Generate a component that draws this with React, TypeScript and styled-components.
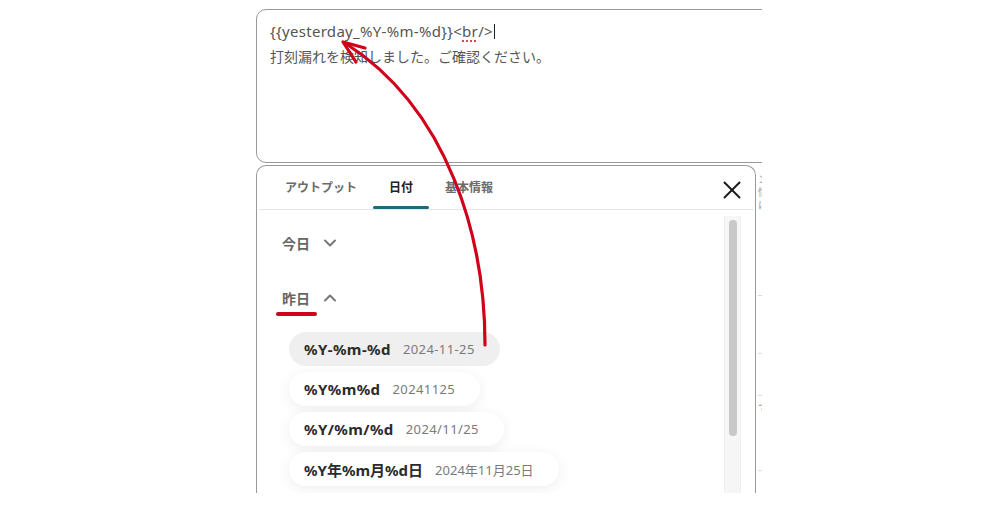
import React from 'react';
import styled, { createGlobalStyle } from 'styled-components';
import { ChevronDown, ChevronUp, X } from 'lucide-react';

const GlobalStyle = createGlobalStyle`
  html, body {
    margin: 0;
    padding: 0;
    background: #fff;
  }
  body {
    font-family: "Noto Sans", "Noto Sans CJK JP", sans-serif;
  }
`;

const Page = styled.div`
  position: relative;
  width: 1000px;
  height: 506px;
  overflow: hidden;
  background: #fff;
`;

const Frame = styled.div`
  margin-left: 256px;
  width: 506px;
  height: 493px;
  padding-top: 9px;
  box-sizing: border-box;
  overflow: hidden;
  display: flex;
  flex-direction: column;
  gap: 2px;
`;

const Editor = styled.div`
  flex: none;
  width: 560px;
  height: 154px;
  box-sizing: border-box;
  border: 1.5px solid #999;
  border-radius: 10px;
  padding: 8px 13px;
  font-size: 14px;
  line-height: 26px;
  color: #555;
`;

const CodeLine = styled.div`
  font-size: 15px;
  letter-spacing: 0.3px;
`;

const Spell = styled.span`
  text-decoration: underline dotted #e0434b;
  text-decoration-thickness: 2px;
  text-underline-offset: 3px;
`;

const Caret = styled.span`
  display: inline-block;
  width: 1px;
  height: 15px;
  margin-left: 1px;
  vertical-align: -2px;
  background: #222;
`;

const Lower = styled.div`
  display: flex;
  flex: 1;
  min-height: 0;
`;

const Popup = styled.div`
  flex: none;
  width: 500px;
  box-sizing: border-box;
  border: 1.5px solid #999;
  border-bottom: none;
  border-radius: 10px 10px 0 0;
  display: flex;
  flex-direction: column;
`;

const TabBar = styled.div`
  display: flex;
  align-items: stretch;
  height: 43px;
  margin: 0 2px;
  padding-left: 10px;
  border-bottom: 1px solid #e6e6e6;
`;

const Tab = styled.div<{ $active?: boolean }>`
  display: flex;
  flex-direction: column;
  padding: 0 16px;
  font-size: 12px;
  font-weight: 700;
  color: ${(p) => (p.$active ? '#222' : '#6b6b6b')};
`;

const TabLabel = styled.span`
  flex: 1;
  display: flex;
  align-items: center;
  padding-top: 1px;
`;

const TabIndicator = styled.span<{ $active?: boolean }>`
  height: 3px;
  margin: 0 -16px;
  border-radius: 2px;
  background: ${(p) => (p.$active ? '#1d6a80' : 'transparent')};
`;

const CloseButton = styled.button`
  margin: 4px 6px 0 auto;
  align-self: center;
  width: 30px;
  height: 30px;
  padding: 0;
  border: none;
  background: none;
  display: flex;
  align-items: center;
  justify-content: center;
  color: #1c1c1c;
`;

const Body = styled.div`
  display: flex;
  flex: 1;
  min-height: 0;
`;

const Content = styled.div`
  flex: 1;
  padding: 21px 0 0 25px;
  display: flex;
  flex-direction: column;
`;

const SectionHeader = styled.div<{ $gap?: number }>`
  display: flex;
  align-items: center;
  gap: 10px;
  height: 24px;
  margin-top: ${(p) => p.$gap ?? 0}px;
  font-size: 14px;
  font-weight: 700;
  color: #666;
`;

const ChipList = styled.div`
  display: flex;
  flex-direction: column;
  align-items: flex-start;
  gap: 6px;
  margin: 22px 0 0 7px;
`;

const Chip = styled.div<{ $selected?: boolean; $tight?: boolean }>`
  display: inline-flex;
  align-items: center;
  gap: 12px;
  height: 34px;
  padding: 0 25px 0 15px;
  border-radius: 17px;
  background: ${(p) => (p.$selected ? '#efefef' : '#fff')};
  box-shadow: ${(p) => (p.$selected ? 'none' : '0 3px 14px rgba(0, 0, 0, 0.07)')};
  letter-spacing: ${(p) => (p.$tight ? '0' : '0.4px')};
`;

const ChipLabel = styled.span`
  font-size: 15px;
  font-weight: 700;
  color: #2b2b2b;
`;

const ChipValue = styled.span`
  font-size: 13px;
  color: #7a7a7a;
`;

const Track = styled.div`
  flex: none;
  width: 17px;
  margin: 6px 14px 0 0;
  box-sizing: border-box;
  background: #f6f6f6;
  border-left: 1px solid #eeeeee;
  border-right: 1px solid #eeeeee;
`;

const Thumb = styled.div`
  width: 8px;
  height: 216px;
  margin: 4px auto 0;
  border-radius: 4px;
  background: #c8c8c8;
`;

const SidePanel = styled.div`
  flex: 1;
  padding: 8px 0 0 2px;
  display: flex;
  flex-direction: column;
  font-size: 10px;
  line-height: 13px;
  color: #9a9a9a;
  white-space: nowrap;
`;

const SideRow = styled.div<{ $top: number; $h: number }>`
  margin-top: ${(p) => p.$top}px;
  height: ${(p) => p.$h}px;
  border-top: 1px solid #dddddd;
  padding-top: 6px;
`;

const Annotation = styled.svg`
  position: absolute;
  top: 0;
  left: 0;
  pointer-events: none;
`;

const formats = [
  { label: '%Y-%m-%d', value: '2024-11-25', selected: true },
  { label: '%Y%m%d', value: '20241125' },
  { label: '%Y/%m/%d', value: '2024/11/25' },
  { label: '%Y年%m月%d日', value: '2024年11月25日', tight: true },
];

export default function App() {
  return (
    <Page>
      <GlobalStyle />
      <Frame>
        <Editor>
          <CodeLine>
            {'{{yesterday_%Y-%m-%d}}<'}
            <Spell>br</Spell>
            {'/>'}
            <Caret />
          </CodeLine>
          <div>打刻漏れを検知しました。ご確認ください。</div>
        </Editor>
        <Lower>
          <Popup>
            <TabBar>
              <Tab>
                <TabLabel>アウトプット</TabLabel>
                <TabIndicator />
              </Tab>
              <Tab $active>
                <TabLabel>日付</TabLabel>
                <TabIndicator $active />
              </Tab>
              <Tab>
                <TabLabel>基本情報</TabLabel>
                <TabIndicator />
              </Tab>
              <CloseButton aria-label="閉じる">
                <X size={30} strokeWidth={1.6} />
              </CloseButton>
            </TabBar>
            <Body>
              <Content>
                <SectionHeader>
                  今日
                  <ChevronDown size={20} strokeWidth={2.4} color="#777" />
                </SectionHeader>
                <SectionHeader $gap={31}>
                  昨日
                  <ChevronUp size={20} strokeWidth={2.4} color="#777" />
                </SectionHeader>
                <ChipList>
                  {formats.map((f) => (
                    <Chip key={f.label} $selected={f.selected} $tight={f.tight}>
                      <ChipLabel>{f.label}</ChipLabel>
                      <ChipValue>{f.value}</ChipValue>
                    </Chip>
                  ))}
                </ChipList>
              </Content>
              <Track>
                <Thumb />
              </Track>
            </Body>
          </Popup>
          <SidePanel>
            <div>ン</div>
            <div>情</div>
            <div>に</div>
            <SideRow $top={83} $h={62} />
            <SideRow $top={0} $h={43} />
            <SideRow $top={0} $h={82}>で</SideRow>
            <SideRow $top={0} $h={20} />
          </SidePanel>
        </Lower>
      </Frame>
      <Annotation width={1000} height={506} viewBox="0 0 1000 506">
        <path
          d="M485 345 C 485 240, 450 110, 345 43"
          fill="none"
          stroke="#d0021b"
          strokeWidth={3.2}
          strokeLinecap="round"
        />
        <polyline
          points="365,48 343,42 356,62"
          fill="none"
          stroke="#d0021b"
          strokeWidth={3.2}
          strokeLinecap="round"
          strokeLinejoin="round"
        />
        <line x1={278} y1={314} x2={315} y2={314} stroke="#d0021b" strokeWidth={4} strokeLinecap="round" />
      </Annotation>
    </Page>
  );
}
